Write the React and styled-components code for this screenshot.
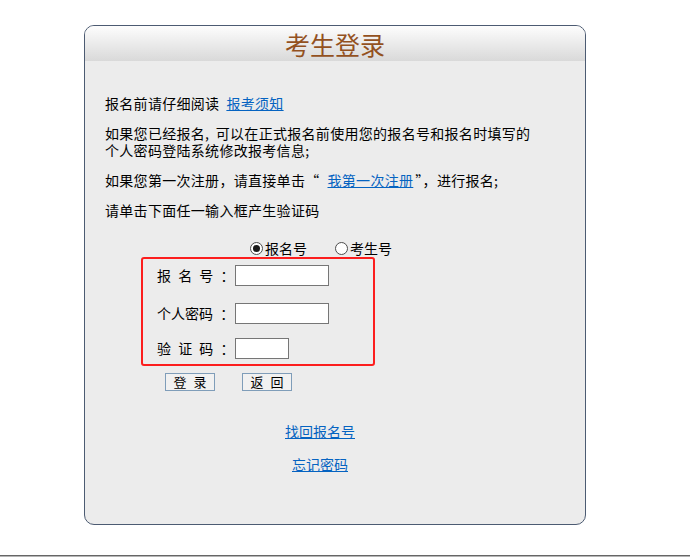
import React, { useState } from 'react';
import styled, { createGlobalStyle } from 'styled-components';

const GlobalStyle = createGlobalStyle`
  html, body {
    margin: 0;
    padding: 0;
    background: #fff;
  }
  body {
    font-family: "Noto Sans CJK SC", "Liberation Sans", sans-serif;
    font-size: 14px;
    color: #000;
  }
`;

const Page = styled.div`
  padding-top: 25px;
  width: 690px;
`;

const Panel = styled.div`
  box-sizing: border-box;
  margin-left: 84px;
  width: 502px;
  height: 500px;
  border: 1px solid #4c5b72;
  border-radius: 10px;
  background: #ececec;
  overflow: hidden;
`;

const Header = styled.div`
  height: 35px;
  background: linear-gradient(#fdfdfd, #d9d9d9);
  display: flex;
  align-items: center;
  justify-content: center;
`;

const Title = styled.h1`
  margin: 0;
  font-size: 25px;
  font-weight: 400;
  line-height: 30px;
  color: #93511f;
`;

const Body = styled.div`
  padding: 34px 20px 0;
`;

const Para = styled.p`
  margin: 0 0 13px;
  line-height: 17px;
  letter-spacing: 0.3px;
  word-spacing: 3px;
`;

const Link = styled.a`
  color: #0563c1;
  text-decoration: underline;
  cursor: pointer;
  margin-left: ${p => p.$gap || 0}px;
  margin-right: ${p => p.$after || 0}px;
`;

const RadioRow = styled.div`
  display: flex;
  align-items: center;
  margin: 21px 0 0 145px;
  height: 17px;
  gap: 28px;
`;

const RadioItem = styled.label`
  display: flex;
  align-items: center;
  gap: 2px;
  cursor: pointer;
  line-height: 17px;
`;

const Circle = styled.span`
  box-sizing: border-box;
  width: 13px;
  height: 13px;
  border-radius: 50%;
  border: 1px solid #4d4d4d;
  background: #fff;
  display: flex;
  align-items: center;
  justify-content: center;

  &::after {
    content: '';
    width: 7px;
    height: 7px;
    border-radius: 50%;
    background: ${p => (p.$on ? '#1a1a1a' : 'transparent')};
  }
`;

const LoginBox = styled.div`
  box-sizing: border-box;
  margin-left: 36px;
  width: 234px;
  height: 109px;
  border: 2px solid #fc1e1e;
  border-radius: 3px;
  padding: 6px 0 0 14px;
  display: flex;
  flex-direction: column;
`;

const Field = styled.div`
  display: flex;
  align-items: center;
  height: 21px;
  margin-top: ${p => p.$top || 0}px;
`;

const Label = styled.span`
  width: 78px;
  white-space: pre;
  word-spacing: 4px;
  line-height: 21px;
`;

const TextInput = styled.input`
  box-sizing: border-box;
  width: ${p => p.$w}px;
  height: 21px;
  border: 1px solid #767676;
  background: #fff;
  padding: 0 3px;
  font-size: 13px;
  outline: none;
`;

const Buttons = styled.div`
  display: flex;
  gap: 27px;
  margin: 7px 0 0 60px;
`;

const Button = styled.button`
  box-sizing: border-box;
  width: 50px;
  height: 18px;
  padding: 0;
  border: 1px solid #7f9db9;
  background: #f1f1f1;
  font-family: "Noto Sans CJK SC", sans-serif;
  font-size: 13px;
  line-height: 16px;
  word-spacing: 4px;
  color: #000;
  white-space: pre;
  cursor: pointer;
`;

const Links = styled.div`
  display: flex;
  flex-direction: column;
  align-items: center;
  gap: 16px;
  margin-top: 32px;
  padding-right: 30px;
  line-height: 17px;
`;

const Rule = styled.div`
  margin-top: 30px;
  border-top: 1px solid #666;
  border-bottom: 1px solid #b5b5b5;
`;

export default function App() {
  const [mode, setMode] = useState('bmh');

  return (
    <Page>
      <GlobalStyle />
      <Panel>
        <Header>
          <Title>考生登录</Title>
        </Header>
        <Body>
          <Para>
            报名前请仔细阅读<Link $gap={7}>报考须知</Link>
          </Para>
          <Para>
            如果您已经报名, 可以在正式报名前使用您的报名号和报名时填写的
            <br />
            个人密码登陆系统修改报考信息;
          </Para>
          <Para>
            如果您第一次注册，请直接单击“<Link $gap={8} $after={2}>我第一次注册</Link>”，进行报名;
          </Para>
          <Para>请单击下面任一输入框产生验证码</Para>

          <RadioRow>
            <RadioItem onClick={() => setMode('bmh')}>
              <Circle $on={mode === 'bmh'} />
              报名号
            </RadioItem>
            <RadioItem onClick={() => setMode('ksh')}>
              <Circle $on={mode === 'ksh'} />
              考生号
            </RadioItem>
          </RadioRow>

          <LoginBox>
            <Field>
              <Label>报 名 号 ：</Label>
              <TextInput $w={94} />
            </Field>
            <Field $top={17}>
              <Label>个人密码 ：</Label>
              <TextInput $w={94} type="password" />
            </Field>
            <Field $top={14}>
              <Label>验 证 码 ：</Label>
              <TextInput $w={54} />
            </Field>
          </LoginBox>

          <Buttons>
            <Button>登 录</Button>
            <Button>返 回</Button>
          </Buttons>

          <Links>
            <Link>找回报名号</Link>
            <Link>忘记密码</Link>
          </Links>
        </Body>
      </Panel>
      <Rule />
    </Page>
  );
}
